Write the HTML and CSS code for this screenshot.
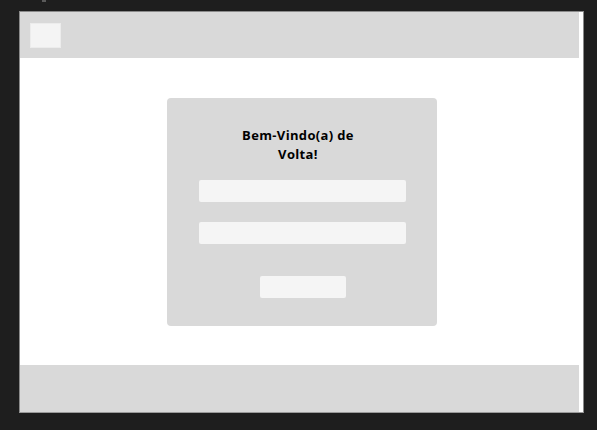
FILE: index.html
```html
<!DOCTYPE html>
<html lang="pt">
<head>
<meta charset="utf-8">
<title>Login</title>
<link rel="stylesheet" href="styles.css">
</head>
<body>
<div class="mark"></div>
<div class="frame">
  <header class="header">
    <div class="logo"></div>
  </header>
  <main class="main">
    <div class="card">
      <h1 class="title">Bem-Vindo(a) de Volta!</h1>
      <div class="field"></div>
      <div class="field"></div>
      <div class="button"></div>
    </div>
  </main>
  <footer class="footer"></footer>
</div>
</body>
</html>
```
FILE: styles.css
```css
html, body {
  margin: 0;
  padding: 0;
}
body {
  background: #1e1e1e;
  width: 597px;
  height: 430px;
  overflow: hidden;
  padding-left: 19px;
  box-sizing: border-box;
  font-family: "Open Sans", "Liberation Sans", sans-serif;
}
.mark {
  width: 4px;
  height: 2px;
  margin-left: 23px;
  background: #5a5a5a;
}
.frame {
  margin-top: 9px;
  width: 565px;
  height: 402px;
  box-sizing: border-box;
  border: 1px solid #8a8a8a;
  border-bottom-color: #9a9a9a;
  background: #ffffff;
  display: flex;
  flex-direction: column;
}
.header {
  height: 46px;
  width: calc(100% - 4px);
  background: #d9d9d9;
  display: flex;
  align-items: center;
  padding-left: 10px;
  box-sizing: border-box;
  flex: none;
}
.logo {
  width: 31px;
  height: 25px;
  background: #f4f4f4;
  border: 1px solid #ececec;
  box-sizing: border-box;
}
.main {
  flex: 1;
  display: flex;
  align-items: center;
  justify-content: center;
  padding-left: 1px;
  padding-top: 1px;
}
.card {
  width: 270px;
  height: 228px;
  box-sizing: border-box;
  background: #d9d9d9;
  border-radius: 4px;
  padding-top: 28px;
  display: flex;
  flex-direction: column;
  align-items: center;
}
.title {
  margin: 0;
  width: 124px;
  padding-right: 8px;
  font-size: 13px;
  line-height: 18.5px;
  font-weight: 700;
  color: #000000;
  text-align: center;
  letter-spacing: 0.35px;
}
.field {
  width: 207px;
  height: 22px;
  background: #f5f5f5;
  border-radius: 2px;
  margin-top: 17px;
  margin-left: 1px;
}
.field + .field {
  margin-top: 20px;
}
.button {
  width: 86px;
  height: 22px;
  background: #f5f5f5;
  border-radius: 2px;
  margin-top: 32px;
  margin-left: 1px;
}
.footer {
  height: 47px;
  width: calc(100% - 4px);
  background: #d9d9d9;
  flex: none;
}
```
